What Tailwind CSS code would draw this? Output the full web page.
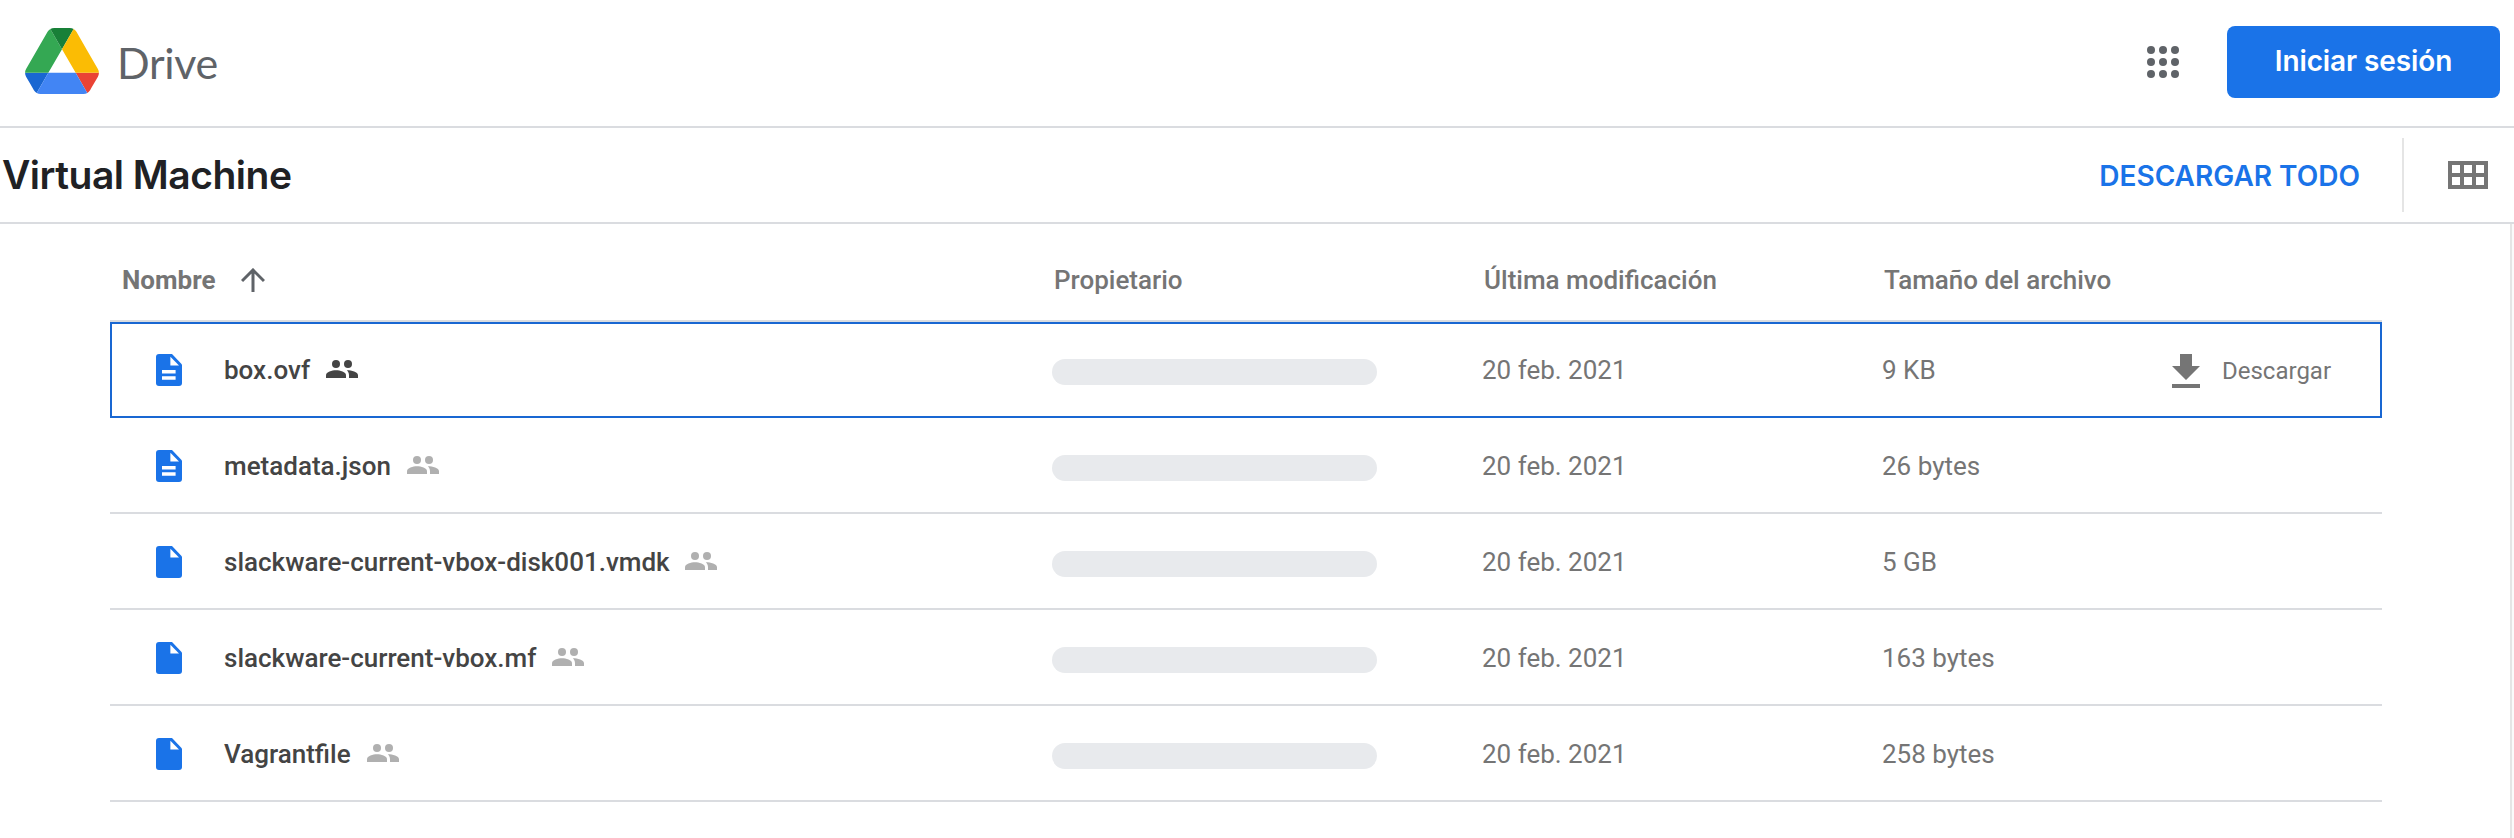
<!DOCTYPE html>
<html lang="es">
<head>
<meta charset="utf-8">
<title>Virtual Machine - Google Drive</title>
<script src="https://cdn.jsdelivr.net/npm/@tailwindcss/browser@4"></script>
</head>
<body class="bg-white h-[838px] overflow-hidden flex flex-col font-['Roboto',sans-serif] text-[26px] text-[#757575]">
<svg class="hidden">
  <symbol id="doc" viewBox="0 0 26 32"><path fill="#1a73e8" d="M3 0H16L26 10.5V29a3 3 0 0 1-3 3H3a3 3 0 0 1-3-3V3a3 3 0 0 1 3-3z"/><path fill="#fff" d="M14.4 2.8V11.6H23z"/><path fill="#fff" d="M6 16h13.6v3.6H6zM6 22.2h13.6v3.6H6z"/></symbol>
  <symbol id="file" viewBox="0 0 26 32"><path fill="#1a73e8" d="M3 0H16L26 10.5V29a3 3 0 0 1-3 3H3a3 3 0 0 1-3-3V3a3 3 0 0 1 3-3z"/><path fill="#fff" d="M14.4 2.8V11.6H23z"/></symbol>
  <symbol id="people" viewBox="0 0 32 18"><g fill="currentColor"><circle cx="10" cy="4" r="4"/><circle cx="22" cy="4" r="4"/><path d="M0 18v-2.8C0 12 6 10.200 10 10.200S20 12 20 15.200V18z"/><path d="M20.800 10.300C25 10.200 32 12 32 15.200V18H23v-2.800c0-2-.8-3.700-2.200-4.900z"/></g></symbol>
</svg>

<header class="h-32 shrink-0 border-b-2 border-[#dadce0] flex items-center pl-[25px] pr-[14px]">
  <svg class="w-[74px] h-[66px] mb-1" viewBox="0 0 87.3 78">
    <path fill="#1967d2" d="m6.600 66.850 3.850 6.650c.8 1.400 1.950 2.500 3.300 3.300l13.750-23.800h-27.500c0 1.550.4 3.100 1.200 4.500z"/>
    <path fill="#34a853" d="m43.650 25-13.750-23.800c-1.350.8-2.500 1.900-3.300 3.300l-25.400 44a9.060 9.060 0 0 0-1.200 4.500h27.500z"/>
    <path fill="#ea4335" d="m73.550 76.800c1.350-.8 2.500-1.900 3.300-3.300l1.600-2.750 7.650-13.250c.8-1.400 1.200-2.950 1.200-4.500h-27.500z"/>
    <path fill="#188038" d="m43.650 25 13.750-23.800c-1.350-.8-2.900-1.200-4.500-1.200h-18.500c-1.600 0-3.150.45-4.500 1.200z"/>
    <path fill="#4285f4" d="m59.800 53h-32.300l-13.750 23.800c1.350.8 2.900 1.200 4.500 1.200h50.800c1.600 0 3.150-.45 4.500-1.200z"/>
    <path fill="#fbbc04" d="m73.400 26.500-12.700-22c-.8-1.400-1.950-2.500-3.300-3.300l-13.750 23.800 16.150 28h27.450c0-1.550-.4-3.100-1.200-4.500z"/>
  </svg>
  <span class="ml-[18px] font-['Lato',sans-serif] text-[43px] leading-[52px] tracking-[-0.3px] text-[#5f6368]">Drive</span>
  <svg class="ml-auto w-8 h-8 mb-[2px] fill-[#5f6368]" viewBox="0 0 32 32"><circle cx="4" cy="4" r="4"/><circle cx="16" cy="4" r="4"/><circle cx="28" cy="4" r="4"/><circle cx="4" cy="16" r="4"/><circle cx="16" cy="16" r="4"/><circle cx="28" cy="16" r="4"/><circle cx="4" cy="28" r="4"/><circle cx="16" cy="28" r="4"/><circle cx="28" cy="28" r="4"/></svg>
  <button class="ml-12 mb-[2px] w-[273px] h-[72px] pb-[2px] rounded-lg bg-[#1a73e8] text-white font-['Inter',sans-serif] font-semibold text-[28px] tracking-[-0.1px]">Iniciar sesión</button>
</header>

<div class="h-24 shrink-0 border-b-2 border-[#dadce0] flex items-center pl-[2px] pr-[26px]">
  <h1 class="font-['Inter',sans-serif] font-semibold text-[39px] leading-[48px] tracking-[-0.5px] text-[#202124]">Virtual Machine</h1>
  <button class="ml-auto mt-[2px] font-['Inter',sans-serif] font-semibold text-[28px] text-[#1a73e8]">DESCARGAR TODO</button>
  <div class="ml-[42px] w-[2px] h-[74px] bg-[#e5e5e5]"></div>
  <svg class="ml-11 w-10 h-7" viewBox="0 0 40 28"><path fill="#757575" fill-rule="evenodd" d="M0 0h40v28H0zM4 4v8h8V4zM16 4v8h8V4zM28 4v8h8V4zM4 16v8h8v-8zM16 16v8h8v-8zM28 16v8h8v-8z"/></svg>
</div>

<div class="flex-1 flex">
  <main class="ml-[110px] w-[2272px]">
    <div class="h-[98px] pt-4 border-b-2 border-[#dadce0] flex items-center font-medium">
      <div class="w-[944px] pl-3 flex items-center font-bold">Nombre
        <svg class="ml-[25px] w-6 h-6" viewBox="0 0 24 24"><path fill="none" stroke="#5f6368" stroke-width="3" d="M12 24V2.200M1 13 12 2l11 11"/></svg>
      </div>
      <div class="w-[430px]">Propietario</div>
      <div class="w-[400px]">Última modificación</div>
      <div>Tamaño del archivo</div>
    </div>

    <div class="h-24 border-2 border-[#1967d2] flex items-center">
      <div class="w-[940px] pl-11 flex items-center text-[#444] font-medium"><svg class="w-[26px] h-8 mr-[42px]"><use href="#doc"/></svg>box.ovf<svg class="w-8 h-[18px] ml-4 mb-[2px]"><use href="#people"/></svg></div>
      <div class="w-[430px]"><div class="w-[325px] h-[26px] mt-1 rounded-full bg-[#e8eaed]"></div></div>
      <div class="w-[400px]">20 feb. 2021</div>
      <div class="w-[290px]">9 KB</div>
      <svg class="w-7 h-[34px] mt-[2px]" viewBox="5 3 14 17"><path fill="#757575" d="M19 9h-4V3H9v6H5l7 7 7-7zM5 18v2h14v-2H5z"/></svg>
      <span class="ml-[22px] mt-[2px] text-2xl">Descargar</span>
    </div>

    <div class="h-24 pt-[2px] border-b-2 border-[#dadce0] flex items-center">
      <div class="w-[942px] pl-[46px] flex items-center text-[#444] font-medium"><svg class="w-[26px] h-8 mr-[42px]"><use href="#doc"/></svg>metadata.json<svg class="w-8 h-[18px] ml-4 mb-[2px] text-[#b0b0b0]"><use href="#people"/></svg></div>
      <div class="w-[430px]"><div class="w-[325px] h-[26px] mt-1 rounded-full bg-[#e8eaed]"></div></div>
      <div class="w-[400px]">20 feb. 2021</div>
      <div>26 bytes</div>
    </div>

    <div class="h-24 pt-[2px] border-b-2 border-[#dadce0] flex items-center">
      <div class="w-[942px] pl-[46px] flex items-center text-[#444] font-medium"><svg class="w-[26px] h-8 mr-[42px]"><use href="#file"/></svg>slackware-current-vbox-disk001.vmdk<svg class="w-8 h-[18px] ml-[15px] mb-[2px] text-[#b0b0b0]"><use href="#people"/></svg></div>
      <div class="w-[430px]"><div class="w-[325px] h-[26px] mt-1 rounded-full bg-[#e8eaed]"></div></div>
      <div class="w-[400px]">20 feb. 2021</div>
      <div>5 GB</div>
    </div>

    <div class="h-24 pt-[2px] border-b-2 border-[#dadce0] flex items-center">
      <div class="w-[942px] pl-[46px] flex items-center text-[#444] font-medium"><svg class="w-[26px] h-8 mr-[42px]"><use href="#file"/></svg>slackware-current-vbox.mf<svg class="w-8 h-[18px] ml-4 mb-[2px] text-[#b0b0b0]"><use href="#people"/></svg></div>
      <div class="w-[430px]"><div class="w-[325px] h-[26px] mt-1 rounded-full bg-[#e8eaed]"></div></div>
      <div class="w-[400px]">20 feb. 2021</div>
      <div>163 bytes</div>
    </div>

    <div class="h-24 pt-[2px] border-b-2 border-[#dadce0] flex items-center">
      <div class="w-[942px] pl-[46px] flex items-center text-[#444] font-medium"><svg class="w-[26px] h-8 mr-[42px]"><use href="#file"/></svg>Vagrantfile<svg class="w-8 h-[18px] ml-4 mb-[2px] text-[#b0b0b0]"><use href="#people"/></svg></div>
      <div class="w-[430px]"><div class="w-[325px] h-[26px] mt-1 rounded-full bg-[#e8eaed]"></div></div>
      <div class="w-[400px]">20 feb. 2021</div>
      <div>258 bytes</div>
    </div>
  </main>
  <div class="ml-auto w-1 border-l-2 border-[#e5e5e5] bg-[#fafafa]"></div>
</div>
</body>
</html>
